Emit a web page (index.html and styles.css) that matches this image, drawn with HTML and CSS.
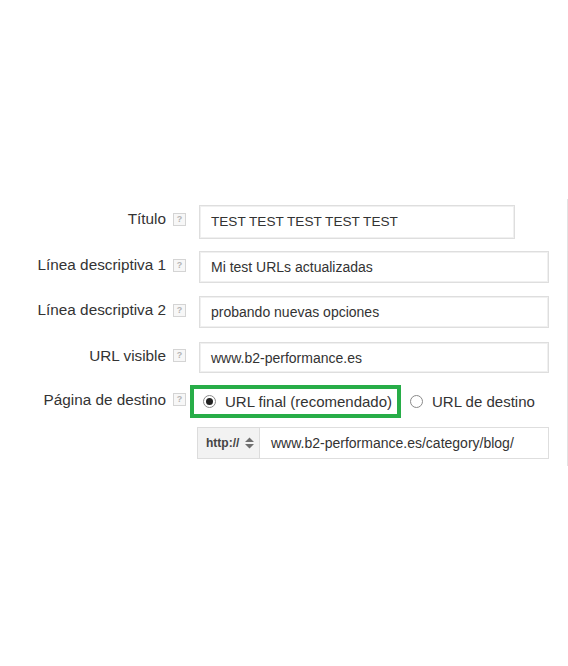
FILE: index.html
```html
<!DOCTYPE html>
<html lang="es">
<head>
<meta charset="utf-8">
<title>Anuncio</title>
<link rel="stylesheet" href="styles.css">
</head>
<body>
<div class="panel">
  <div class="row r1">
    <div class="label">Título</div>
    <div class="help"><span class="q">?</span></div>
    <div class="field"><div class="input title-input">TEST TEST TEST TEST TEST</div></div>
  </div>
  <div class="row r2">
    <div class="label">Línea descriptiva 1</div>
    <div class="help"><span class="q">?</span></div>
    <div class="field"><div class="input">Mi test URLs actualizadas</div></div>
  </div>
  <div class="row r3">
    <div class="label">Línea descriptiva 2</div>
    <div class="help"><span class="q">?</span></div>
    <div class="field"><div class="input">probando nuevas opciones</div></div>
  </div>
  <div class="row r4">
    <div class="label">URL visible</div>
    <div class="help"><span class="q">?</span></div>
    <div class="field"><div class="input">www.b2-performance.es</div></div>
  </div>
  <div class="row r5">
    <div class="label">Página de destino</div>
    <div class="help"><span class="q">?</span></div>
    <div class="field radios">
      <div class="highlight">
        <span class="radio checked"></span>
        <span class="radio-text">URL final (recomendado)</span>
      </div>
      <div class="option">
        <span class="radio"></span>
        <span class="radio-text">URL de destino</span>
      </div>
    </div>
  </div>
  <div class="row r6">
    <div class="label"></div>
    <div class="help"></div>
    <div class="field">
      <div class="url-group">
        <div class="proto">http://
          <svg class="updown" width="11" height="12" viewBox="0 0 11 12"><path d="M5.5 0.5 L10 5 H1 Z M5.5 11.5 L10 7 H1 Z" fill="#6f6f6f"/></svg>
        </div>
        <div class="url-input">www.b2-performance.es/category/blog/</div>
      </div>
    </div>
  </div>
</div>
</body>
</html>
```

FILE: styles.css
```css
html, body {
  margin: 0;
  padding: 0;
  background: #ffffff;
}
body {
  font-family: "Liberation Sans", Arial, sans-serif;
  color: #333333;
}
.panel {
  margin-top: 199px;
  width: 567px;
  border-right: 1px solid #e3e3e3;
  padding: 6px 0 7px 0;
  box-sizing: content-box;
}
.row {
  display: flex;
  align-items: center;
}
.r1 { height: 34px; margin-bottom: 12px; }
.r2 { height: 32px; margin-bottom: 13px; }
.r3 { height: 32px; margin-bottom: 14px; }
.r4 { height: 31px; margin-bottom: 12px; }
.r5 { height: 33px; margin-bottom: 9px; }
.r6 { height: 32px; }
.label {
  width: 166px;
  flex: none;
  text-align: right;
  font-size: 15.3px;
  color: #333333;
  padding-bottom: 4px;
}
.r1 .label, .r1 .help { padding-bottom: 6px; }
.help {
  width: 24px;
  flex: none;
  padding-bottom: 4px;
  display: flex;
}
.q {
  margin-left: 7px;
  width: 11px;
  height: 11px;
  border: 1px solid #d4d4d4;
  background: #f7f7f7;
  color: #b4b4b4;
  font-size: 9px;
  font-weight: bold;
  line-height: 11px;
  text-align: center;
  display: block;
}
.field {
  flex: none;
  width: 359px;
  height: 100%;
  display: flex;
  align-items: stretch;
}
.input {
  margin-left: 9px;
  width: 350px;
  box-sizing: border-box;
  border: 1px solid #dedede;
  box-shadow: inset 0 0 0 1px #f0f0f0;
  padding-left: 11px;
  display: flex;
  align-items: center;
  font-size: 14px;
  color: #333333;
}
.title-input {
  width: 316px;
  font-size: 13.6px;
  padding-left: 11px;
  padding-bottom: 2px;
}
.radios {
  align-items: stretch;
}
.highlight {
  width: 211px;
  box-sizing: border-box;
  border: 4px solid #27ad48;
  display: flex;
  align-items: center;
  padding-left: 9px;
}
.option {
  display: flex;
  align-items: center;
  padding-left: 9px;
}
.radio {
  width: 13px;
  height: 13px;
  box-sizing: border-box;
  border: 1px solid #8a8a8a;
  border-radius: 50%;
  background: #fff;
  display: inline-flex;
  align-items: center;
  justify-content: center;
  flex: none;
}
.radio.checked::after {
  content: "";
  width: 7px;
  height: 7px;
  border-radius: 50%;
  background: #222222;
}
.radio-text {
  margin-left: 9px;
  font-size: 15px;
  color: #333333;
  white-space: nowrap;
}
.url-group {
  margin-left: 7px;
  width: 352px;
  display: flex;
  box-sizing: border-box;
}
.proto {
  width: 63px;
  box-sizing: border-box;
  border: 1px solid #dcdcdc;
  background: #f2f2f2;
  font-size: 12px;
  font-weight: bold;
  color: #444444;
  display: flex;
  align-items: center;
  padding-left: 8px;
  gap: 5px;
}
.updown {
  display: block;
}
.url-input {
  flex: 1;
  border: 1px solid #dedede;
  border-left: none;
  display: flex;
  align-items: center;
  padding-left: 11px;
  font-size: 14px;
  color: #333333;
}
```
